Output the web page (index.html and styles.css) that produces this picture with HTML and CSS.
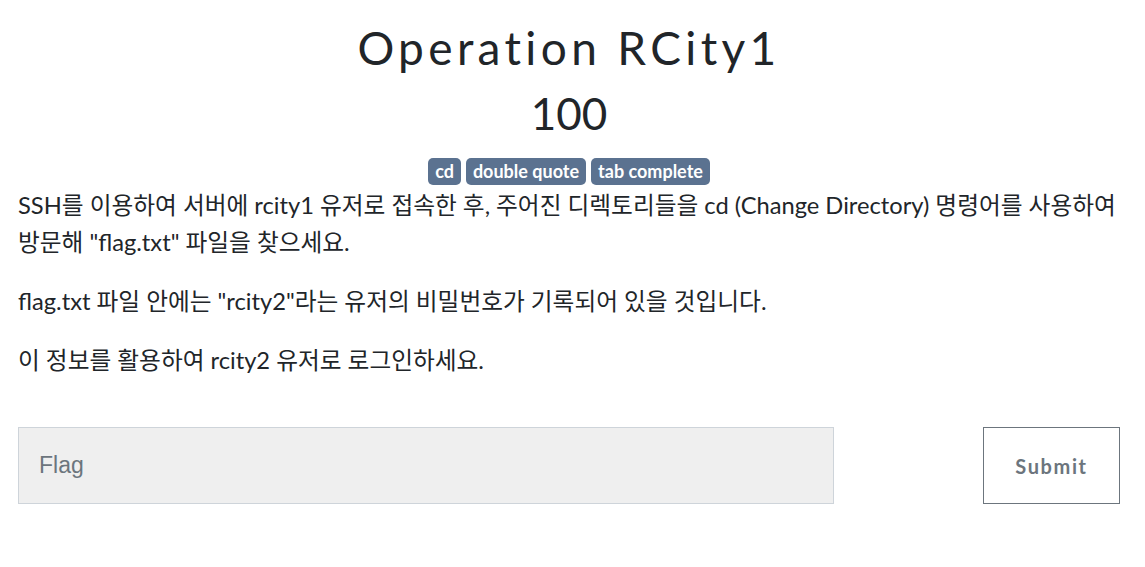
FILE: index.html
```html
<!DOCTYPE html>
<html lang="ko">
<head>
<meta charset="utf-8">
<title>Operation RCity1</title>
<link rel="stylesheet" href="styles.css">
</head>
<body>
<div class="challenge">
  <h2 class="challenge-name">Operation RCity1</h2>
  <h3 class="challenge-value">100</h3>
  <div class="tags">
    <span class="badge">cd</span>
    <span class="badge">double quote</span>
    <span class="badge">tab complete</span>
  </div>
  <div class="desc">
    <p>SSH를 이용하여 서버에 rcity1 유저로 접속한 후, 주어진 디렉토리들을 cd (Change Directory) 명령어를 사용하여 방문해 "flag.txt" 파일을 찾으세요.</p>
    <p>flag.txt 파일 안에는 "rcity2"라는 유저의 비밀번호가 기록되어 있을 것입니다.</p>
    <p>이 정보를 활용하여 rcity2 유저로 로그인하세요.</p>
  </div>
  <form class="submit-row">
    <input class="flag-input" type="text" placeholder="Flag">
    <button class="submit-btn" type="button">Submit</button>
  </form>
</div>
</body>
</html>
```
FILE: styles.css
```css
html, body {
  margin: 0;
  padding: 0;
  background: #ffffff;
}
body {
  font-family: Lato, "Noto Sans CJK KR", sans-serif;
  color: #212529;
}
.challenge {
  padding: 16px 25px 0 18px;
}
.challenge-name {
  margin: 0;
  text-align: center;
  font-family: Lato, sans-serif;
  font-weight: 400;
  font-size: 46px;
  letter-spacing: 4.35px;
  line-height: 64px;
}
.challenge-value {
  margin: 9px 0 0 0;
  text-align: center;
  font-family: Lato, sans-serif;
  font-weight: 400;
  font-size: 44px;
  line-height: 48px;
}
.tags {
  display: flex;
  justify-content: center;
  gap: 5px;
  margin-top: 21px;
}
.badge {
  background: #5b7290;
  color: #ffffff;
  font-family: Lato, sans-serif;
  font-weight: 700;
  font-size: 18px;
  line-height: 27px;
  padding: 0 7px;
  border-radius: 5px;
}
.desc {
  margin-top: 2px;
  font-size: 23.7px;
  line-height: 37px;
}
.desc p {
  margin: 0 0 22px 0;
}
.submit-row {
  display: flex;
  justify-content: space-between;
  margin-top: 48px;
}
.flag-input {
  width: 816px;
  height: 77px;
  box-sizing: border-box;
  background: #efefef;
  border: 1px solid #ced4da;
  padding: 0 20px;
  font-family: "Liberation Sans", Arial, sans-serif;
  font-size: 23px;
  color: #495057;
  outline: none;
}
.flag-input::placeholder {
  color: #6c757d;
}
.submit-btn {
  width: 137px;
  height: 77px;
  box-sizing: border-box;
  background: #ffffff;
  border: 1px solid #6c757d;
  color: #6c757d;
  font-family: Lato, sans-serif;
  font-weight: 700;
  font-size: 20px;
  letter-spacing: 1.6px;
}
```
